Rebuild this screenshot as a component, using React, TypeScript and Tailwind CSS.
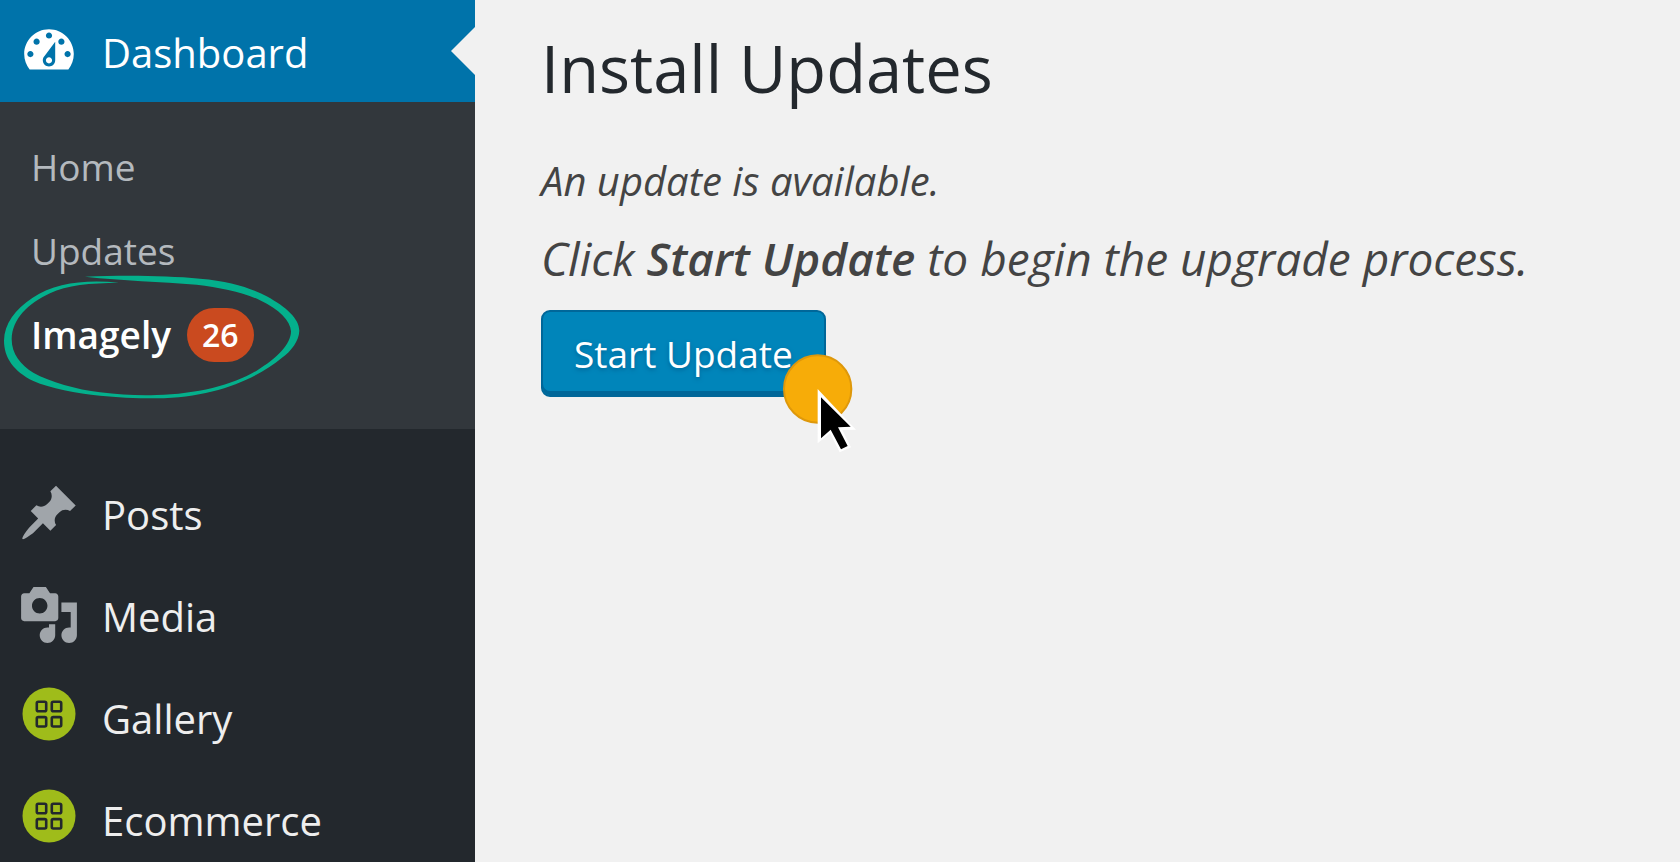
import * as React from "react";

interface MenuItem {
  label: string;
  icon: React.ReactNode;
}

const DashboardIcon = () => (
  <svg viewBox="0 0 20 20" className="size-[62px] shrink-0" fill="currentColor" aria-hidden="true">
    <path d="M3.76 16h12.48c1.1-1.37 1.76-3.11 1.76-5 0-4.42-3.58-8-8-8s-8 3.58-8 8c0 1.89.66 3.63 1.76 5zM10 4c.55 0 1 .45 1 1s-.45 1-1 1-1-.45-1-1 .45-1 1-1zM6 6c.55 0 1 .45 1 1s-.45 1-1 1-1-.45-1-1 .45-1 1-1zm8 0c.55 0 1 .45 1 1s-.45 1-1 1-1-.45-1-1 .45-1 1-1zm-5.37 5.55L12 7v6c0 1.1-.9 2-2 2s-2-.9-2-2c0-.57.24-1.08.63-1.45zM4 10c.55 0 1 .45 1 1s-.45 1-1 1-1-.45-1-1 .45-1 1-1zm12 0c.55 0 1 .45 1 1s-.45 1-1 1-1-.45-1-1 .45-1 1-1zm-5 3c0-.55-.45-1-1-1s-1 .45-1 1 .45 1 1 1 1-.45 1-1z" />
  </svg>
);

const PostIcon = () => (
  <svg viewBox="0 0 20 20" className="size-[62px] shrink-0 text-[#a0a5aa]" fill="currentColor" aria-hidden="true">
    <path d="M10.44 3.02l1.82-1.82 6.36 6.35-1.83 1.82c-1.05-.68-2.48-.57-3.41.36l-.75.75c-.92.93-1.04 2.35-.35 3.41l-1.83 1.82-2.41-2.41-2.8 2.79c-.42.42-3.38 2.71-3.8 2.29s1.86-3.39 2.28-3.81l2.79-2.79L4.1 9.36l1.83-1.82c1.05.69 2.48.57 3.4-.36l.75-.75c.93-.92 1.05-2.35.36-3.41z" />
  </svg>
);

const MediaIcon = () => (
  <svg viewBox="0 0 20 20" className="size-[62px] shrink-0 text-[#a0a5aa]" fill="currentColor" aria-hidden="true">
    <path d="M13 11V4c0-.55-.45-1-1-1h-1.67L9 1H5L3.67 3H2c-.55 0-1 .45-1 1v7c0 .55.45 1 1 1h10c.55 0 1-.45 1-1zM7 4.5c1.38 0 2.5 1.12 2.5 2.5S8.38 9.5 7 9.5 4.5 8.38 4.5 7 5.62 4.5 7 4.5zM14 6h5v10.5c0 1.38-1.12 2.5-2.5 2.5S14 17.88 14 16.5s1.12-2.5 2.5-2.5c.17 0 .34.02.5.05V9h-3V6zm-4 8.05V13h2v3.5c0 1.38-1.12 2.5-2.5 2.5S7 17.88 7 16.5 8.12 14 9.5 14c.17 0 .34.02.5.05z" />
  </svg>
);

const GridIcon = () => (
  <svg viewBox="0 0 62 62" className="size-[62px] shrink-0" fill="none" aria-hidden="true">
    <circle cx="31" cy="28" r="26.5" fill="#9fbc1a" />
    <g stroke="#23282d" strokeWidth="2.6">
      <rect x="18.8" y="15.8" width="9.4" height="9.4" rx="1.5" />
      <rect x="33.8" y="15.8" width="9.4" height="9.4" rx="1.5" />
      <rect x="18.8" y="31.1" width="9.4" height="9.4" rx="1.5" />
      <rect x="33.8" y="31.1" width="9.4" height="9.4" rx="1.5" />
    </g>
  </svg>
);

// hand drawn ring around the active submenu item
const Ring = () => (
  <svg
    viewBox="0 0 960 480"
    className="pointer-events-none absolute top-[-34px] left-0 h-[160px] w-[320px]"
    fill="#04b08c"
    aria-hidden="true"
  >
    <path d="M255 53 C380 48 500 50 600 59 C690 66 750 86 800 112 C860 145 898 180 898 215 C897 245 875 275 845 297 C770 360 640 417 470 418 C400 418 350 415 300 410 C230 404 150 388 100 366 C40 336 12 295 12 245 C13 195 45 150 98 116 C165 70 260 61 357 71 C270 72 200 78 150 103 C85 133 36 180 35 240 C35 285 62 318 100 341 C150 369 230 391 300 400 C360 407 415 410 470 408 C590 406 700 377 770 335 C832 298 873 255 873 217 C871 185 838 152 780 124 C730 99 660 86 590 77 C480 67 370 66 255 53 Z" />
  </svg>
);

const Pointer = () => (
  <svg
    viewBox="0 0 240 300"
    className="pointer-events-none absolute top-[43px] left-[241px] h-[100px] w-[80px]"
    aria-hidden="true"
  >
    <circle cx="107" cy="108" r="101" fill="#f7ac08" stroke="#de980b" strokeWidth="6" />
    <path d="M107 108 L107 271 L144 241 L173 298 L207 283 L181 231 L222 230 Z" fill="#fff" />
    <path d="M117 133 L117 256 L146 230 L177 289 L197 279 L168 223 L206 221 Z" fill="#000" />
  </svg>
);

const menuItems: MenuItem[] = [
  { label: "Posts", icon: <PostIcon /> },
  { label: "Media", icon: <MediaIcon /> },
  { label: "Gallery", icon: <GridIcon /> },
  { label: "Ecommerce", icon: <GridIcon /> },
];

const Sidebar: React.FC = () => (
  <nav className="w-[475px] shrink-0 bg-[#23282d] text-[40px] text-[#eee]">
    <a href="#dashboard" className="relative flex h-[102px] items-center gap-[22px] bg-[#0073aa] pl-[18px] text-white">
      <DashboardIcon />
      <span className="pt-1">Dashboard</span>
      <span className="absolute top-[27px] right-0 border-y-[24px] border-r-[24px] border-y-transparent border-r-[#f1f1f1]" />
    </a>
    <ul className="bg-[#32373c] pt-[23px] pb-[52px] text-[37px] text-[#b4b9be]">
      <li>
        <a href="#home" className="flex h-[84px] items-center pl-[31px]">Home</a>
      </li>
      <li>
        <a href="#updates" className="flex h-[84px] items-center pl-[31px]">Updates</a>
      </li>
      <li className="relative">
        <a href="#imagely" className="flex h-[84px] items-center gap-4 pl-[31px] font-semibold text-white">
          Imagely
          <span className="flex h-[54px] items-center rounded-full bg-[#ca4a1f] px-[15px] text-[32px]">26</span>
        </a>
        <Ring />
      </li>
    </ul>
    <ul className="pt-[33px]">
      {menuItems.map((item) => (
        <li key={item.label}>
          <a href={`#${item.label.toLowerCase()}`} className="flex h-[102px] items-center gap-[22px] pl-[18px]">
            {item.icon}
            <span className="pt-1">{item.label}</span>
          </a>
        </li>
      ))}
    </ul>
  </nav>
);

const InstallUpdates: React.FC = () => (
  <main className="min-w-0 flex-1 px-[66px] pt-6 text-[#444]">
    <h1 className="text-[65px] leading-[88px] text-[#23282d]">Install Updates</h1>
    <p className="mt-10 text-[40px] leading-[58px] italic">An update is available.</p>
    <p className="mt-4 text-[46px] leading-[64px] italic">
      Click <strong className="font-semibold">Start Update</strong> to begin the upgrade process.
    </p>
    <div className="relative mt-5 flex">
      <button
        type="button"
        className="h-[87px] rounded-[9px] border-2 border-[#006799] bg-[#0085ba] px-[31px] text-[37px] text-white shadow-[inset_0_-4px_0_#006799] [text-shadow:0_2px_4px_#006799]"
      >
        Start Update
      </button>
      <Pointer />
    </div>
  </main>
);

export default function App() {
  return (
    <div className="flex h-screen overflow-hidden bg-[#f1f1f1] font-['Open_Sans','Noto_Sans',sans-serif]">
      <Sidebar />
      <InstallUpdates />
    </div>
  );
}
